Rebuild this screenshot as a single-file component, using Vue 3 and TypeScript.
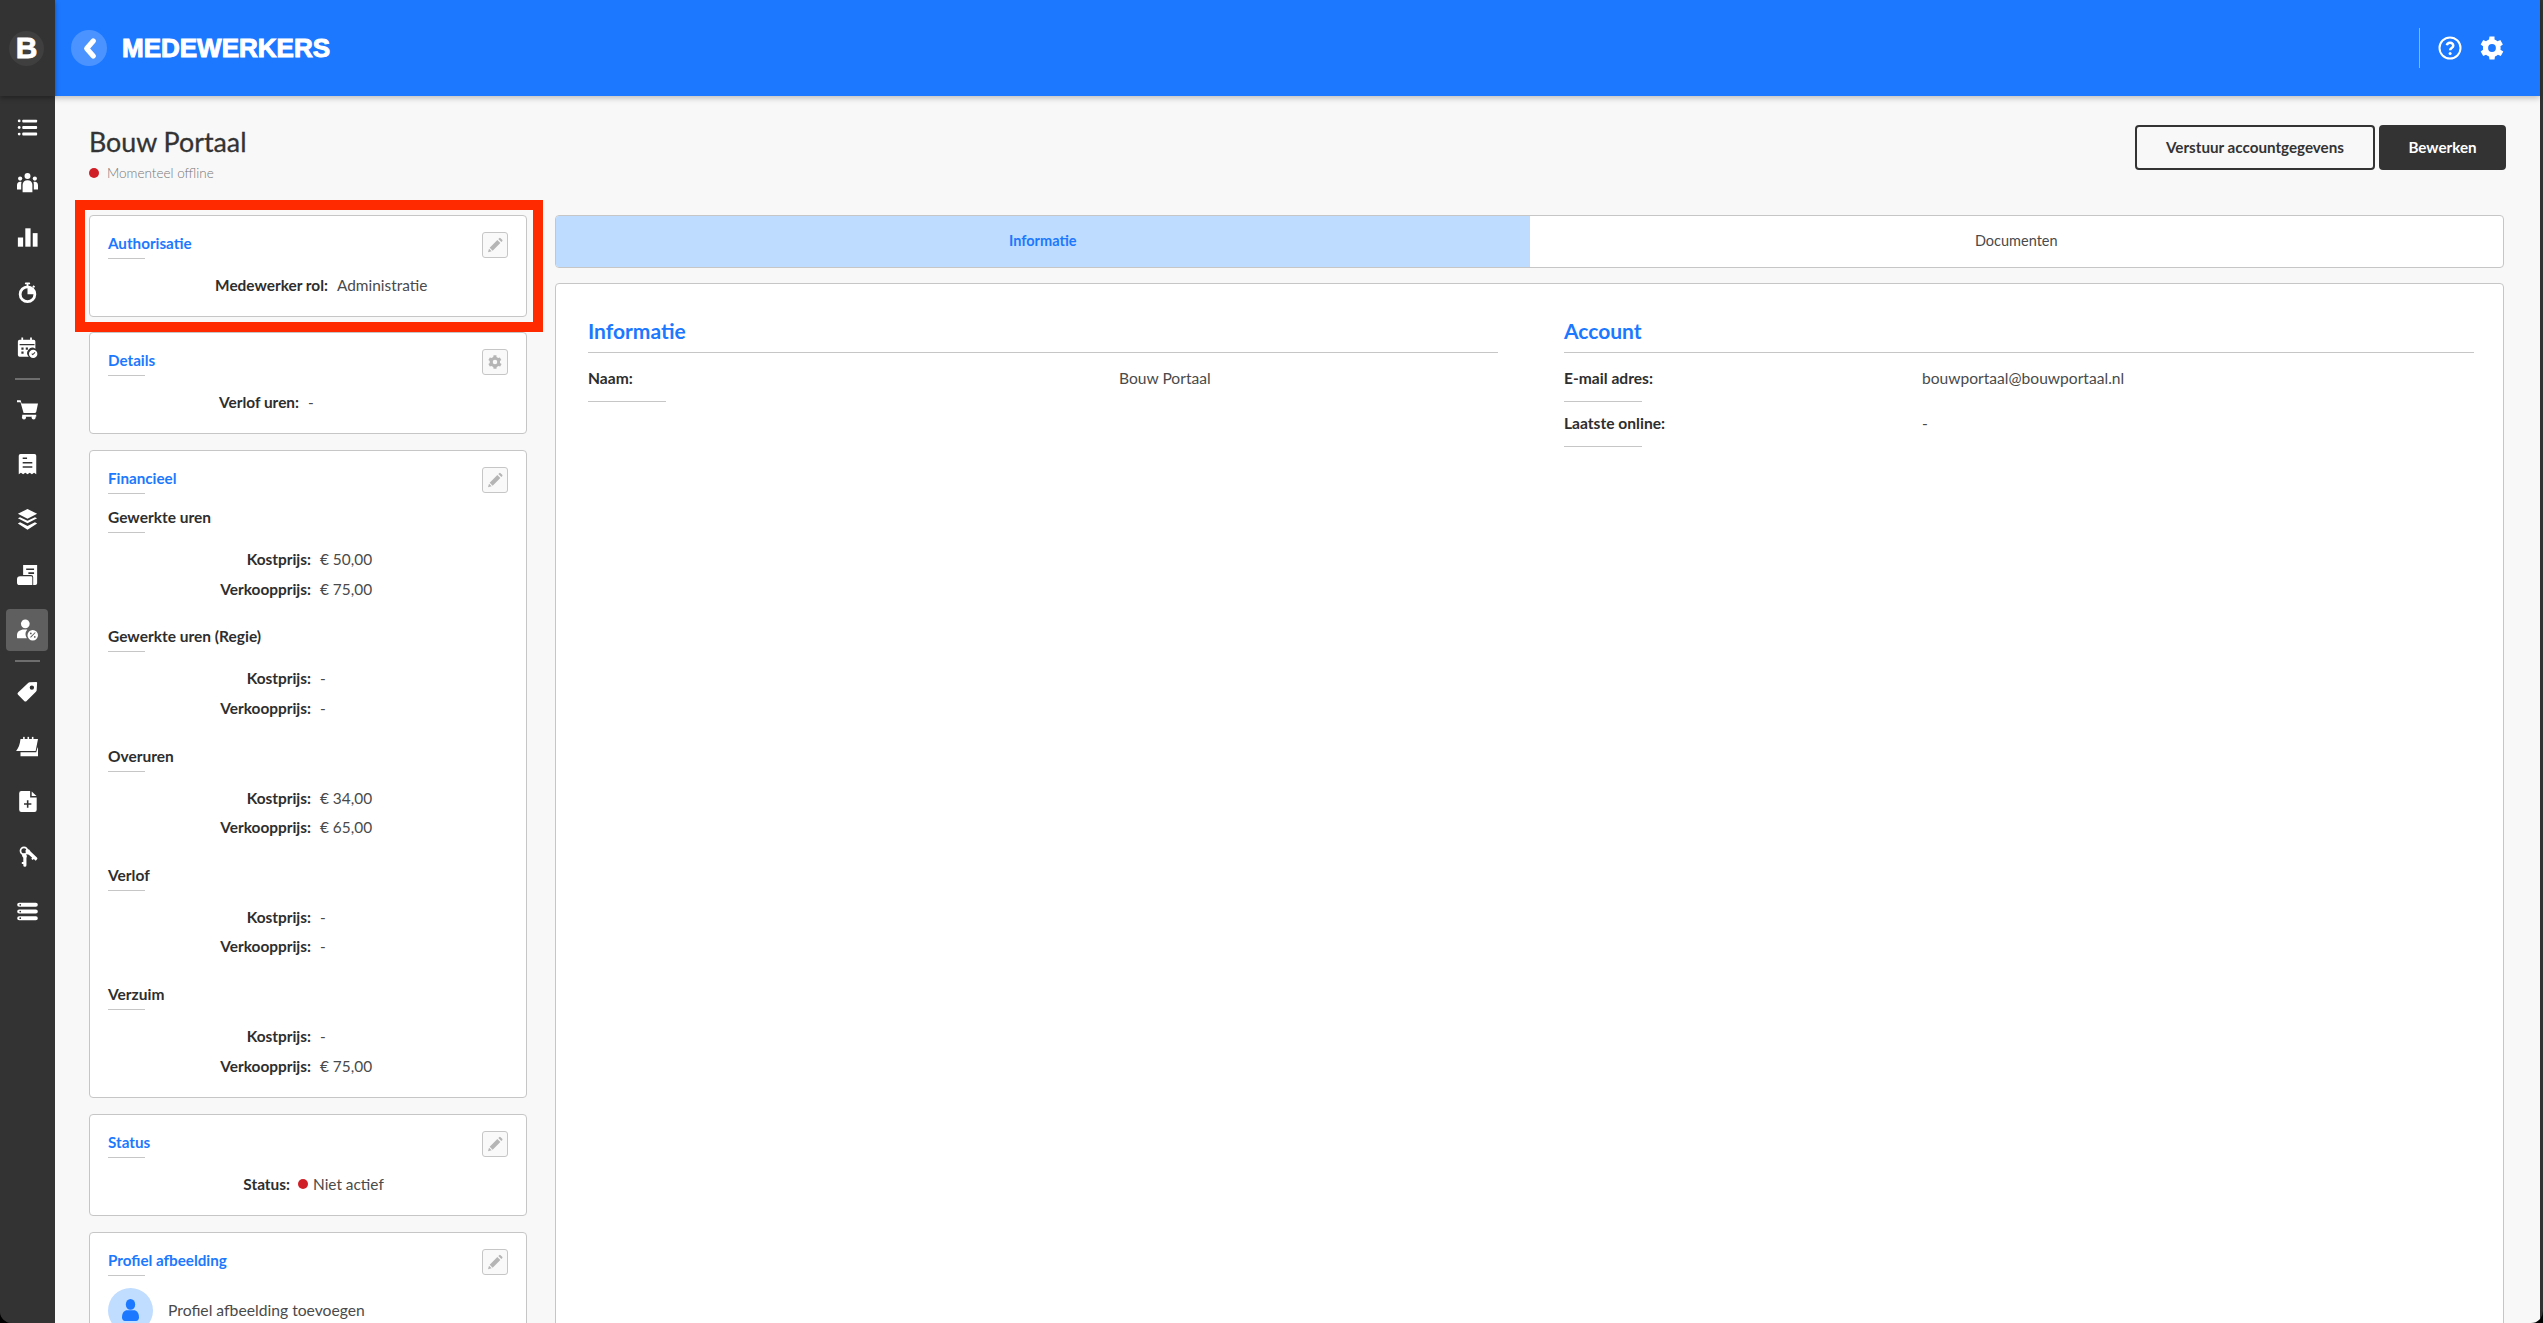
<script setup lang="ts">
interface NavItem {
  id: string;
  active?: boolean;
}
interface PriceGroup {
  title: string;
  cost: string;
  sale: string;
}

// 'sep' draws the thin line between the nav groups
const nav: NavItem[] = [
  { id: "list" },
  { id: "people" },
  { id: "chart" },
  { id: "timer" },
  { id: "calendar" },
  { id: "sep" },
  { id: "cart" },
  { id: "receipt" },
  { id: "layers" },
  { id: "scroll" },
  { id: "percent", active: true },
  { id: "sep" },
  { id: "tag" },
  { id: "pad" },
  { id: "file" },
  { id: "keys" },
  { id: "server" },
];

const groups: PriceGroup[] = [
  { title: "Gewerkte uren", cost: "€ 50,00", sale: "€ 75,00" },
  { title: "Gewerkte uren (Regie)", cost: "-", sale: "-" },
  { title: "Overuren", cost: "€ 34,00", sale: "€ 65,00" },
  { title: "Verlof", cost: "-", sale: "-" },
  { title: "Verzuim", cost: "-", sale: "€ 75,00" },
];

const gearPath =
  "M19.4 13.5a7.6 7.6 0 0 0 0-3l2.1-1.6-2.2-3.8-2.5 1a7.6 7.6 0 0 0-2.6-1.5L14.2 2H9.8l-.4 2.6a7.6 7.6 0 0 0-2.6 1.5l-2.5-1-2.2 3.8 2.1 1.6a7.6 7.6 0 0 0 0 3l-2.1 1.6 2.2 3.8 2.5-1a7.6 7.6 0 0 0 2.6 1.5l.4 2.6h4.4l.4-2.6a7.6 7.6 0 0 0 2.6-1.5l2.5 1 2.2-3.8zM12 15.4a3.4 3.4 0 1 1 0-6.8 3.4 3.4 0 0 1 0 6.8z";
const pencilPath =
  "M15.5 4.5l4.500 4.500L8.500 20.500 4 16zM17 3l1.300-1.300a1.500 1.500 0 0 1 2.100 0l2.400 2.400a1.500 1.500 0 0 1 0 2.100L21.500 7.500zM3 17.500L7 21.500 1.500 23z";
</script>

<template>
  <div class="window">
    <aside class="sidebar">
      <div class="logo-wrap">
        <div class="logo">B</div>
      </div>
      <nav class="nav">
        <template v-for="(item, i) in nav" :key="i">
          <div v-if="item.id === 'sep'" class="nav-sep"><span></span></div>
          <div v-else class="nav-item">
            <div class="nav-box" :class="{ active: item.active }">
              <svg class="nav-icon" viewBox="0 0 24 24" fill="#fff">
                <g v-if="item.id === 'list'">
                  <circle cx="2.5" cy="4.5" r="1.6" /><circle cx="2.5" cy="12" r="1.6" /><circle cx="2.5" cy="19.5" r="1.6" />
                  <rect x="6" y="3" width="17" height="3.2" rx="1" /><rect x="6" y="10.4" width="17" height="3.2" rx="1" /><rect x="6" y="17.8" width="17" height="3.2" rx="1" />
                </g>
                <g v-else-if="item.id === 'people'">
                  <circle cx="12" cy="4.5" r="3.4" /><circle cx="3.6" cy="7.5" r="2.4" /><circle cx="20.4" cy="7.5" r="2.4" />
                  <path d="M6.4 23v-8.5c0-3 2.2-5.2 5.6-5.2s5.600 2.200 5.600 5.200V23z" />
                  <path d="M0 20v-5c0-2.400 1.400-4 3.600-4 .7 0 1.200.1 1.600.3-.3 1-.4 2-.4 3.200V20zM24 20v-5c0-2.400-1.400-4-3.600-4-.7 0-1.200.1-1.600.3.3 1 .4 2 .4 3.200V20z" />
                </g>
                <g v-else-if="item.id === 'chart'">
                  <rect x="1" y="12" width="6" height="10.500" /><rect x="9.500" y="1.500" width="6" height="21" /><rect x="18" y="7" width="5.500" height="15.500" />
                </g>
                <g v-else-if="item.id === 'timer'">
                  <rect x="9" y="0.500" width="6" height="2.200" rx="1" /><rect x="11" y="2" width="2" height="3" />
                  <path fill-rule="evenodd" d="M12 4a10 10 0 1 1 0 20 10 10 0 0 1 0-20zm0 3.200a6.800 6.800 0 1 0 6.800 6.800H12z" />
                  <path d="M17.500 5.200l1.500-1.500 1.700 1.700-1.500 1.500z" />
                </g>
                <g v-else-if="item.id === 'calendar'">
                  <path fill-rule="evenodd" d="M5 0.500h2V3h8V0.500h2V3h2a2 2 0 0 1 2 2v8.300a6 6 0 0 0-7.600 9.200H3a2 2 0 0 1-2-2V5a2 2 0 0 1 2-2h2zM3 8v1.500h17V8zm2 4v2.500h2.500V12zm5 0v2.500h2.500V12zm-5 4.500V19h2.500v-2.500z" />
                  <path fill-rule="evenodd" d="M18.500 14.500a4.800 4.800 0 1 1 0 9.600 4.800 4.800 0 0 1 0-9.600zm-2 5l1.500 1.300 3-2.800-.8-.8-2.200 2.100-.7-.6z" />
                </g>
                <g v-else-if="item.id === 'cart'">
                  <path d="M0 1.500h4.200l1 3.500H24l-2 9.500a2 2 0 0 1-2 1.500H7.500L4 3.800H0z" />
                  <path d="M6 18h16v2.300H6z" /><circle cx="8" cy="21" r="2.300" /><circle cx="19" cy="21" r="2.300" />
                </g>
                <g v-else-if="item.id === 'receipt'">
                  <path fill-rule="evenodd" d="M4 0h16a2 2 0 0 1 2 2v21l-2.500-1.500-2.500 1.500-2.500-1.500-2.500 1.500-2.500-1.500L7 23l-2.500-1.500L2 23V2a2 2 0 0 1 2-2zm2.500 4v1.800h5V4zm0 5v1.800h11V9zm0 5v1.800h11V14z" />
                </g>
                <g v-else-if="item.id === 'layers'">
                  <path d="M12 0l11 5.500L12 11 1 5.500z" />
                  <path d="M3.500 9.300L12 13.500l8.500-4.200 2.500 1.400L12 16.300 1 10.700z" />
                  <path d="M3.500 14.800L12 19l8.500-4.200 2.500 1.400L12 23.500 1 16.200z" transform="translate(0 .3)" />
                </g>
                <g v-else-if="item.id === 'scroll'">
                  <path fill-rule="evenodd" d="M7 1h16v21a2 2 0 0 1-2 2h-2.500V15a2.500 2.500 0 0 0-2.500-2.500H7zm3.500 4v1.800h9V5zm2.500 4.500v1.800h6.500V9.500z" />
                  <path d="M3.500 14h12.500a1.500 1.500 0 0 1 1.500 1.500V24H3a3 3 0 0 1-3-3v-3.500A3.500 3.500 0 0 1 3.500 14z" />
                </g>
                <g v-else-if="item.id === 'percent'">
                  <circle cx="9.500" cy="5.500" r="5" />
                  <path d="M0 21v-2.500C0 14.500 3.500 12 8 12h3.800a8.500 8.500 0 0 0-.5 10H1a1 1 0 0 1-1-1z" />
                  <path fill-rule="evenodd" d="M18 12.500a6 6 0 1 1 0 12 6 6 0 0 1 0-12zm2.500 2.500L15 20.500l.8.8 5.500-5.500zM15.800 15.500a1 1 0 1 0 0 2 1 1 0 0 0 0-2zm4.500 4a1 1 0 1 0 0 2 1 1 0 0 0 0-2z" />
                </g>
                <g v-else-if="item.id === 'tag'">
                  <path fill-rule="evenodd" d="M14.500 1.500L22 1a1 1 0 0 1 1 1l-.5 8.500a3 3 0 0 1-.9 1.800L11 22.800a2 2 0 0 1-2.800 0L1.200 15.800a2 2 0 0 1 0-2.800L12.700 2.400a3 3 0 0 1 1.800-.9zM17 5a2.500 2.500 0 1 0 0 5 2.500 2.500 0 0 0 0-5z" />
                </g>
                <g v-else-if="item.id === 'pad'">
                  <path d="M4 3.500h20l-2.700 13.500H-1c2.800-3 4.300-7.500 5-13.500z" />
                  <path d="M4 18.500h18l1.500-5.500.5.500v9.500H4z" />
                  <rect x="7" y="1" width="1.800" height="2.500" /><rect x="12" y="1" width="1.800" height="2.500" /><rect x="17" y="1" width="1.800" height="2.500" />
                </g>
                <g v-else-if="item.id === 'file'">
                  <path fill-rule="evenodd" d="M5 0h10v7.500h7.500V21.500A2.500 2.500 0 0 1 20 24H5a2.500 2.500 0 0 1-2.500-2.500v-19A2.500 2.500 0 0 1 5 0zm6.300 10.500V14H8v1.800h3.300v3.400h1.800v-3.400h3.300V14h-3.300v-3.500z" />
                  <path d="M16.800 .5l5.500 5.300h-5.500z" />
                </g>
                <g v-else-if="item.id === 'keys'">
                  <circle cx="8" cy="5.500" r="4" fill="none" stroke="#fff" stroke-width="2" />
                  <path d="M6 9a3.600 3.600 0 0 1 5 1.500c.5 1 .4 2-.2 2.800V22a1.800 1.800 0 0 1-3.600 0v-1.500H5.500v-2.200h1.700v-5A3.600 3.600 0 0 1 6 9z" />
                  <path d="M11 3.500a4 4 0 0 1 4.500 2.800L22.800 13a1.500 1.500 0 0 1 .1 2.100l-1.500 1.700-2.200-2-1.300 1.300-1.600-1.500 1-1.100-3.800-3.500a4 4 0 0 1-2.500-7z" />
                </g>
                <g v-else-if="item.id === 'server'">
                  <path fill-rule="evenodd" d="M2.500 2h19a2.200 2.200 0 0 1 0 4.600h-19a2.200 2.200 0 0 1 0-4.600zm1.200 1.300a1 1 0 1 0 0 2 1 1 0 0 0 0-2zM2.500 9.700h19a2.200 2.200 0 0 1 0 4.600h-19a2.200 2.200 0 0 1 0-4.600zm1.200 1.300a1 1 0 1 0 0 2 1 1 0 0 0 0-2zM2.500 17.400h19a2.200 2.200 0 0 1 0 4.600h-19a2.200 2.200 0 0 1 0-4.600zm1.200 1.300a1 1 0 1 0 0 2 1 1 0 0 0 0-2z" />
                </g>
              </svg>
            </div>
          </div>
        </template>
      </nav>
    </aside>

    <div class="page">
      <header class="topbar">
        <div class="topbar-left">
          <div class="back">
            <svg viewBox="0 0 16 24" width="15" height="23" fill="none" stroke="#fff" stroke-width="5.500" stroke-linecap="round" stroke-linejoin="round">
              <path d="M12 4L5 12l7 8" />
            </svg>
          </div>
          <h1 class="page-name">MEDEWERKERS</h1>
        </div>
        <div class="topbar-right">
          <span class="topbar-sep"></span>
          <svg class="topbar-icon" viewBox="0 0 24 24">
            <circle cx="12" cy="12" r="10.500" fill="none" stroke="#fff" stroke-width="2" />
            <path d="M8.800 9.300a3.300 3.300 0 0 1 6.500.4c0 2.200-3.200 2.500-3.200 4.500" fill="none" stroke="#fff" stroke-width="2.400" />
            <circle cx="12.100" cy="17.500" r="1.500" fill="#fff" />
          </svg>
          <svg class="topbar-icon" viewBox="1.500 1.500 21 21" fill="#fff"><path :d="gearPath" /></svg>
        </div>
      </header>

      <main class="content">
        <div class="content-head">
          <div>
            <h2 class="person">Bouw Portaal</h2>
            <div class="presence"><span class="dot"></span>Momenteel offline</div>
          </div>
          <div class="actions">
            <button class="btn btn-outline">Verstuur accountgegevens</button>
            <button class="btn btn-dark">Bewerken</button>
          </div>
        </div>

        <div class="columns">
          <div class="left">
            <section class="card card-first">
              <span class="highlight"></span>
              <div class="card-head">
                <div class="card-title">Authorisatie<i class="rule"></i></div>
                <button class="edit"><svg viewBox="0 0 24 24" fill="#b5b5b5"><path :d="pencilPath" /></svg></button>
              </div>
              <div class="kv kv-role"><b>Medewerker rol:</b><span>Administratie</span></div>
            </section>

            <section class="card">
              <div class="card-head">
                <div class="card-title">Details<i class="rule"></i></div>
                <button class="edit"><svg viewBox="0 0 24 24" fill="#b5b5b5"><path :d="gearPath" /></svg></button>
              </div>
              <div class="kv kv-leave"><b>Verlof uren:</b><span>-</span></div>
            </section>

            <section class="card">
              <div class="card-head">
                <div class="card-title">Financieel<i class="rule"></i></div>
                <button class="edit"><svg viewBox="0 0 24 24" fill="#b5b5b5"><path :d="pencilPath" /></svg></button>
              </div>
              <div v-for="g in groups" :key="g.title" class="price-group">
                <div class="group-title">{{ g.title }}<i class="rule"></i></div>
                <div class="kv kv-price"><b>Kostprijs:</b><span>{{ g.cost }}</span></div>
                <div class="kv kv-price"><b>Verkoopprijs:</b><span>{{ g.sale }}</span></div>
              </div>
            </section>

            <section class="card">
              <div class="card-head">
                <div class="card-title">Status<i class="rule"></i></div>
                <button class="edit"><svg viewBox="0 0 24 24" fill="#b5b5b5"><path :d="pencilPath" /></svg></button>
              </div>
              <div class="kv kv-status"><b>Status:</b><span class="status-val"><span class="dot dot-big"></span>Niet actief</span></div>
            </section>

            <section class="card">
              <div class="card-head">
                <div class="card-title">Profiel afbeelding<i class="rule"></i></div>
                <button class="edit"><svg viewBox="0 0 24 24" fill="#b5b5b5"><path :d="pencilPath" /></svg></button>
              </div>
              <div class="avatar-row">
                <div class="avatar">
                  <svg viewBox="2 1 20 22.500" width="17" height="22" preserveAspectRatio="none" fill="#1c78ff">
                    <circle cx="12" cy="6.500" r="5.500" />
                    <path d="M2 20c0-5 3-7.500 6-7.500h8c3 0 6 2.500 6 7.500 0 2-1.500 3.500-3.500 3.500h-13C3.500 23.500 2 22 2 20z" />
                  </svg>
                </div>
                <span>Profiel afbeelding toevoegen</span>
              </div>
            </section>
          </div>

          <div class="right">
            <div class="tabs">
              <div class="tab active">Informatie</div>
              <div class="tab">Documenten</div>
            </div>
            <section class="panel">
              <div class="info">
                <h3>Informatie</h3>
                <div class="info-row info-row-wide"><b>Naam:</b><span>Bouw Portaal</span></div>
              </div>
              <div class="info">
                <h3>Account</h3>
                <div class="info-row"><b>E-mail adres:</b><span>bouwportaal@bouwportaal.nl</span></div>
                <div class="info-row"><b>Laatste online:</b><span>-</span></div>
              </div>
            </section>
          </div>
        </div>
      </main>
    </div>
  </div>
</template>

<style>
html,
body {
  margin: 0;
  background: #000;
}
</style>

<style scoped>
* {
  box-sizing: border-box;
}
.window {
  display: flex;
  width: 2543px;
  height: 1323px;
  overflow: hidden;
  background: #333;
  border-radius: 0 0 12px 12px;
  font-family: Lato, "Open Sans", sans-serif;
  font-size: 15.4px;
  color: #2e2e2e;
}
.sidebar {
  flex: 0 0 55px;
  width: 55px;
  background: #333;
  position: relative;
  z-index: 2;
}
.logo-wrap {
  height: 96px;
  display: flex;
  align-items: center;
  padding-left: 9px;
  box-shadow: 0 2px 5px rgba(0, 0, 0, 0.35);
}
.logo {
  width: 35px;
  height: 35px;
  border-radius: 50%;
  background: #3f3f3f;
  color: #fff;
  display: flex;
  align-items: center;
  justify-content: center;
  font: 700 30px "Liberation Sans", sans-serif;
  -webkit-text-stroke: 0.8px #fff;
}
.nav {
  padding-top: 4px;
}
.nav-item {
  height: 55px;
  display: flex;
  align-items: center;
  padding-left: 6px;
}
.nav-box {
  width: 42px;
  height: 42px;
  border-radius: 4px;
  display: flex;
  align-items: center;
  justify-content: center;
}
.nav-box.active {
  background: #5f5f5f;
}
.nav-icon {
  width: 21px;
  height: 21px;
  overflow: visible;
}
.nav-sep {
  height: 7px;
  display: flex;
  align-items: center;
  padding-left: 15px;
}
.nav-sep span {
  width: 25px;
  height: 2px;
  background: #6e6e6e;
}
.page {
  width: 2485px;
  flex: none;
  background: #f8f8f8;
  position: relative;
}
.topbar {
  height: 96px;
  background: #1c78ff;
  box-shadow: 0 2px 6px rgba(0, 0, 0, 0.25);
  display: flex;
  justify-content: space-between;
  align-items: center;
  padding: 0 36px 0 16px;
  position: relative;
  z-index: 1;
}
.topbar-left {
  display: flex;
  align-items: center;
  gap: 15px;
}
.back {
  width: 36px;
  height: 36px;
  border-radius: 50%;
  background: #4b94ff;
  display: flex;
  align-items: center;
  justify-content: center;
}
.page-name {
  margin: 0;
  color: #fff;
  font: 700 26px "Liberation Sans", sans-serif;
  -webkit-text-stroke: 1px #fff;
}
.topbar-right {
  display: flex;
  align-items: center;
  gap: 18px;
}
.topbar-sep {
  width: 1px;
  height: 40px;
  background: rgba(255, 255, 255, 0.45);
}
.topbar-icon {
  width: 24px;
  height: 24px;
}
.content {
  padding: 29px 36px 0 34px;
}
.content-head {
  display: flex;
  justify-content: space-between;
  height: 90px;
}
.person {
  margin: 1px 0 0;
  font-size: 26.800px;
  font-weight: 400;
  line-height: 32px;
  -webkit-text-stroke: 0.3px #333;
  color: #333;
}
.presence {
  display: flex;
  align-items: center;
  margin-top: 7px;
  font-size: 13.500px;
  font-weight: 300;
  color: #777;
  line-height: 16px;
}
.dot {
  width: 10px;
  height: 10px;
  border-radius: 50%;
  background: #d01f26;
  margin-right: 8px;
  flex: none;
}
.actions {
  display: flex;
  gap: 4px;
  margin-right: -2px;
}
.btn {
  height: 45px;
  border-radius: 4px;
  font-family: inherit;
  font-size: 15.200px;
  font-weight: 700;
  padding: 0 0 2px;
}
.btn-outline {
  width: 240px;
  background: #f8f8f8;
  border: 2px solid #333;
  color: #333;
}
.btn-dark {
  width: 127px;
  background: #333;
  border: 2px solid #333;
  color: #fff;
}
.columns {
  display: flex;
  gap: 28px;
  align-items: flex-start;
}
.left {
  flex: 0 0 438px;
  display: flex;
  flex-direction: column;
  gap: 16px;
}
.right {
  flex: 1;
}
.card {
  position: relative;
  background: #fff;
  border: 1px solid #c6c6c6;
  border-radius: 4px;
  padding: 16px 18px 21px;
}
.card-first {
  margin-bottom: -1px;
}
.highlight {
  position: absolute;
  left: -15px;
  top: -16px;
  width: 468px;
  height: 132px;
  border: 10px solid #ff2a00;
  pointer-events: none;
}
.card-head {
  display: flex;
  justify-content: space-between;
  align-items: flex-start;
}
.card-title {
  margin-top: 1px;
  font-size: 15.200px;
  font-weight: 700;
  line-height: 20px;
  color: #1c78ff;
}
.rule {
  display: block;
  width: 37px;
  height: 1px;
  background: #c6c6c6;
  margin-top: 5px;
}
.edit {
  width: 26px;
  height: 26px;
  padding: 4px;
  border: 1px solid #c6c6c6;
  border-radius: 3px;
  background: #f9f9f9;
  display: flex;
  align-items: center;
  justify-content: center;
}
.edit svg {
  width: 16px;
  height: 16px;
  flex: none;
}
.kv {
  display: grid;
  column-gap: 9px;
  margin-top: 16px;
  line-height: 20px;
}
.kv b {
  text-align: right;
  font-weight: 700;
}
.kv span {
  font-weight: 400;
  color: #4a4a4a;
}
.kv-role {
  grid-template-columns: 220px 1fr;
}
.kv-leave {
  grid-template-columns: 191px 1fr;
}
.kv-price {
  grid-template-columns: 203px 1fr;
  margin-top: 9.500px;
}
.kv-status {
  grid-template-columns: 182px 1fr;
  column-gap: 8px;
}
.status-val {
  display: flex;
  align-items: center;
}
.kv .dot-big {
  width: 10px;
  height: 10px;
  margin-right: 5px;
}
.price-group {
  margin-top: 27.750px;
}
.card-head + .price-group {
  margin-top: 13px;
}
.group-title {
  font-size: 15.500px;
  font-weight: 700;
  line-height: 20px;
}
.group-title + .kv {
  margin-top: 16px;
}
.avatar-row {
  display: flex;
  align-items: center;
  gap: 15px;
  margin-top: 12px;
  font-size: 15.700px;
  color: #4a4a4a;
}
.avatar {
  width: 45px;
  height: 45px;
  border-radius: 50%;
  background: #c0dcff;
  display: flex;
  align-items: center;
  justify-content: center;
}
.tabs {
  display: flex;
  height: 53px;
  background: #fff;
  border: 1px solid #c6c6c6;
  border-radius: 4px;
  overflow: hidden;
}
.tab {
  flex: 1;
  display: flex;
  align-items: center;
  justify-content: center;
  padding-bottom: 2px;
  font-size: 14.500px;
  color: #4a4a4a;
}
.tab.active {
  background: #bedcff;
  color: #1c78ff;
  font-weight: 700;
}
.panel {
  margin-top: 15px;
  height: 1100px;
  background: #fff;
  border: 1px solid #c6c6c6;
  border-radius: 4px;
  padding: 33px 29px 0 32px;
  display: flex;
  gap: 66px;
}
.info {
  flex: 1;
}
.info h3 {
  margin: 0;
  font-size: 21px;
  font-weight: 700;
  line-height: 27px;
  height: 36px;
  color: #1c78ff;
  border-bottom: 1px solid #c6c6c6;
}
.info-row {
  display: grid;
  grid-template-columns: 358px 1fr;
  padding-top: 15px;
  line-height: 20px;
  height: 45px;
  position: relative;
  font-size: 15.600px;
}
.info-row-wide {
  grid-template-columns: 531px 1fr;
}
.info-row b {
  font-weight: 700;
}
.info-row span {
  font-weight: 400;
  color: #4a4a4a;
}
.info-row::after {
  content: "";
  position: absolute;
  left: 0;
  bottom: -4px;
  width: 78px;
  height: 1px;
  background: #c6c6c6;
}
</style>
